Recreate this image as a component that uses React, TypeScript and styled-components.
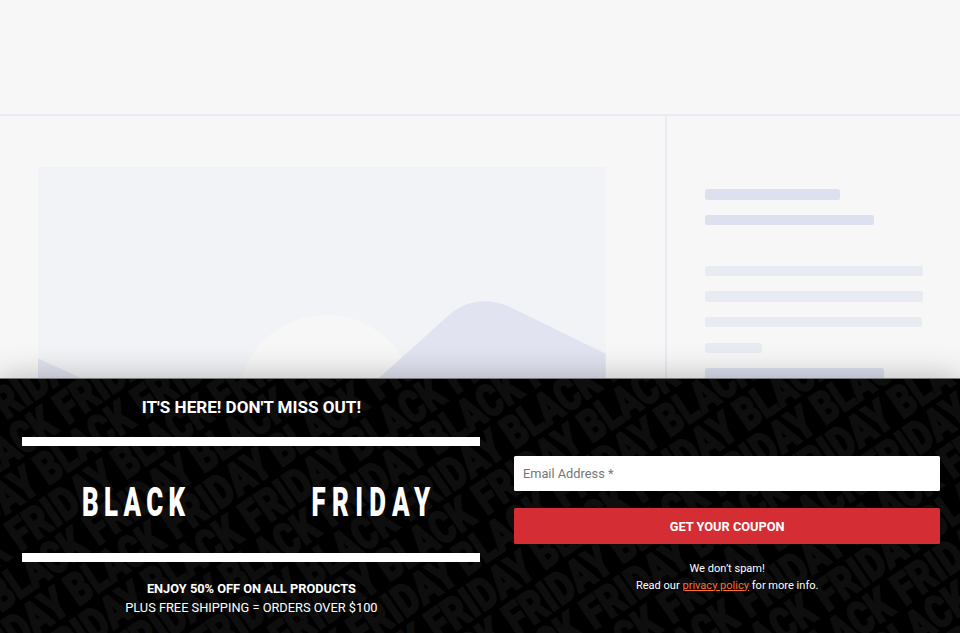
import React from "react";
import styled, { createGlobalStyle } from "styled-components";

const GlobalStyle = createGlobalStyle`
  * { box-sizing: border-box; }
  body { margin: 0; background: #f7f7f7; font-family: Roboto, "Liberation Sans", sans-serif; overflow: hidden; }
`;

const Page = styled.div`
  height: 633px;
  width: 960px;
  display: flex;
  flex-direction: column;
  overflow: hidden;
  background: #f7f7f7;
`;

const HeaderSpace = styled.header`
  flex: 0 0 116px;
  border-bottom: 2px solid #e9eaf2;
`;

const Preview = styled.main`
  flex: 0 0 262px;
  display: flex;
  overflow: hidden;
`;

const Article = styled.section`
  width: 667px;
  padding: 51px 0 0 38px;
  border-right: 2px solid #e8ebf2;
`;

const Picture = styled.svg`
  display: block;
`;

const Aside = styled.aside`
  flex: 1;
  padding: 73px 0 0 38.3px;
  display: flex;
  flex-direction: column;
  gap: 15.1px;
`;

const Line = styled.div<{ $width: number; $strong?: boolean; $gapAfter?: boolean }>`
  flex: none;
  width: ${(p) => p.$width}px;
  height: 10.5px;
  border-radius: 2.5px;
  background: ${(p) => (p.$strong ? "#dde0ef" : "#e8ebf2")};
  margin-bottom: ${(p) => (p.$gapAfter ? 25.6 : 0)}px;
`;

const Banner = styled.section`
  position: relative;
  flex: 1;
  display: flex;
  border-top: 1px solid #777879;
  background: #000;
  color: #fff;
  box-shadow: 0 0 30px rgba(0, 0, 0, 0.27);
`;

const Backdrop = styled.svg`
  position: absolute;
  inset: 0;
  width: 100%;
  height: 100%;
`;

const Offer = styled.div`
  position: relative;
  width: 458px;
  margin-left: 22.4px;
  display: flex;
  flex-direction: column;
  text-align: center;
`;

const Title = styled.h2`
  margin: 16px 0 17px;
  font-size: 17.07px;
  line-height: 25px;
  font-weight: 700;
`;

const Rule = styled.div`
  height: 9px;
  background: #fff;
`;

const Words = styled.div`
  height: 107px;
  display: grid;
  grid-template-columns: 1fr 1fr;
  align-items: center;
`;

const Word = styled.span<{ $shift: number; $tracking: number }>`
  display: block;
  font-size: 41px;
  line-height: 48px;
  font-weight: 900;
  letter-spacing: ${(p) => p.$tracking}px;
  transform: translate(${(p) => p.$shift}px, 1.5px) scaleX(0.63);
`;

const Details = styled.p<{ $strong?: boolean }>`
  margin: ${(p) => (p.$strong ? "17px 0 0" : "0")};
  font-size: 12.8px;
  line-height: 19px;
  font-weight: ${(p) => (p.$strong ? 700 : 400)};
`;

const Form = styled.form`
  position: relative;
  width: 425.6px;
  margin: 77px 0 0 34px;
  display: flex;
  flex-direction: column;
`;

const Email = styled.input`
  height: 35.4px;
  padding: 0 8.5px;
  border: 0;
  border-radius: 1.5px;
  background: #fff;
  font: 400 12.8px/19px Roboto, sans-serif;
  &::placeholder { color: #757575; opacity: 1; }
`;

const Submit = styled.button`
  height: 36px;
  margin-top: 17px;
  padding: 0;
  border: 0;
  border-radius: 1.5px;
  background: #d42d34;
  color: #fff;
  font: 700 12.8px/19px Roboto, sans-serif;
`;

const Note = styled.p`
  margin: 17px 0 0;
  text-align: center;
  font-size: 11.05px;
  line-height: 16.25px;
  a { color: #f96d32; text-decoration: underline; }
`;

const LINES = [
  { width: 134.5, strong: true },
  { width: 169, strong: true, gapAfter: true },
  { width: 217.5 },
  { width: 217.5 },
  { width: 217 },
  { width: 57 },
  { width: 179, strong: true },
];

const Landscape = () => (
  <Picture width="568" height="300" viewBox="0 0 568 300">
    <rect width="567.7" height="300" fill="#f1f3f7" />
    <circle cx="288.3" cy="237" r="89" fill="#f7f7f7" />
    <path d="M0 191.3 L48 213.5 V300 H0Z" fill="#e1e3f0" />
    <path d="M300 247.7 L410 149 C428 132 452 130 474 141 L567.7 186.7 V300 H300Z" fill="#e1e3f0" />
  </Picture>
);

const PERIOD = 245.8;
const STAGGER = 67.5;
const PITCH = 38.9;
const ROWS = Array.from({ length: 24 }, (_, i) => i - 4);
const REPEATS = [-3, -2, -1, 0, 1, 2, 3, 4];

/* Slanted rows of the slogan; each row starts a fixed step after the one above. */
const Slogans = () => (
  <Backdrop viewBox="0 0 960 254" aria-hidden="true">
    <defs>
      <g id="slogan" fill="#0e0e0e" stroke="#0e0e0e" strokeWidth="1.8" fontFamily="Roboto" fontWeight="900" fontSize="45">
        <text x="1" y="0" textLength="108" lengthAdjust="spacingAndGlyphs">BLACK</text>
        <text x="119" y="0" textLength="120" lengthAdjust="spacingAndGlyphs">FRIDAY</text>
      </g>
    </defs>
    <g transform="translate(47.3 107.5) rotate(-34.4)">
      {ROWS.map((row) =>
        REPEATS.map((n) => (
          <use
            key={`${row}:${n}`}
            href="#slogan"
            x={row * STAGGER + (n - Math.round((row * STAGGER) / PERIOD)) * PERIOD}
            y={row * PITCH}
          />
        ))
      )}
    </g>
  </Backdrop>
);

export default function App() {
  return (
    <>
      <GlobalStyle />
      <Page>
        <HeaderSpace />
        <Preview>
          <Article>
            <Landscape />
          </Article>
          <Aside>
            {LINES.map((l, i) => (
              <Line key={i} $width={l.width} $strong={l.strong} $gapAfter={l.gapAfter} />
            ))}
          </Aside>
        </Preview>
        <Banner>
          <Slogans />
          <Offer>
            <Title>IT'S HERE! DON'T MISS OUT!</Title>
            <Rule />
            <Words>
              <Word $shift={-0.3} $tracking={8.4}>BLACK</Word>
              <Word $shift={8.6} $tracking={10}>FRIDAY</Word>
            </Words>
            <Rule />
            <Details $strong>ENJOY 50% OFF ON ALL PRODUCTS</Details>
            <Details>PLUS FREE SHIPPING = ORDERS OVER $100</Details>
          </Offer>
          <Form onSubmit={(e) => e.preventDefault()}>
            <Email type="email" placeholder="Email Address *" />
            <Submit type="submit">GET YOUR COUPON</Submit>
            <Note>
              We don’t spam!
              <br />
              Read our <a href="#privacy">privacy policy</a> for more info.
            </Note>
          </Form>
        </Banner>
      </Page>
    </>
  );
}
